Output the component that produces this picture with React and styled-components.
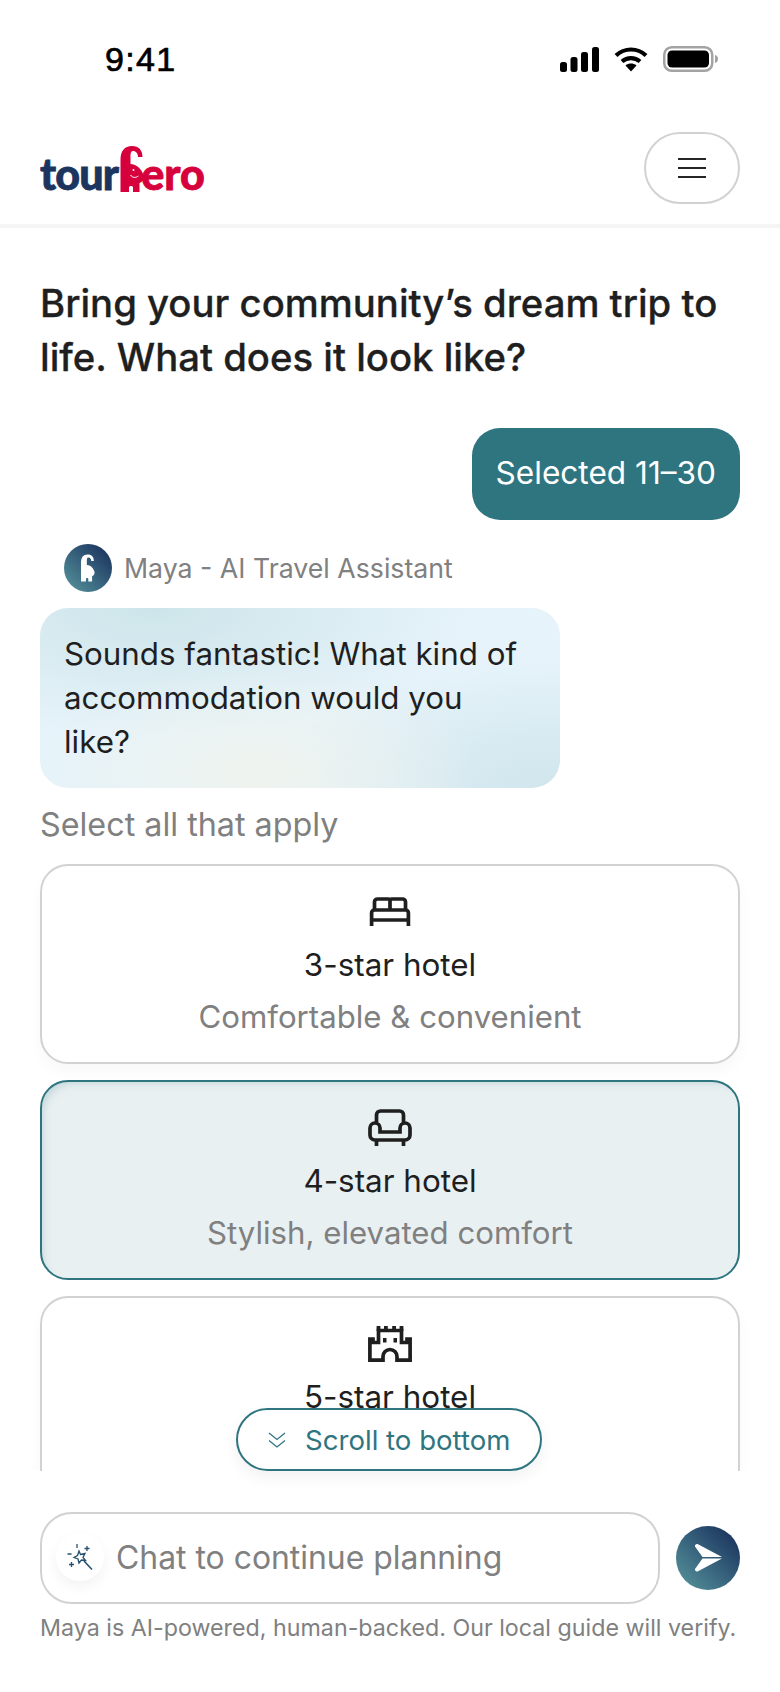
import React from 'react'
import styled, { createGlobalStyle } from 'styled-components'

const GlobalStyle = createGlobalStyle`
  html, body {
    margin: 0;
    padding: 0;
    background: #fff;
  }
  body {
    font-family: "Inter", "Noto Sans", sans-serif;
    color: #1f1f1f;
  }
`

const Page = styled.div`
  width: 780px;
  height: 1692px;
  display: flex;
  flex-direction: column;
  overflow: hidden;
  background: #fff;
`

const StatusBar = styled.div`
  height: 100px;
  box-sizing: border-box;
  padding: 41px 62px 0 105px;
  display: flex;
  justify-content: space-between;
  align-items: flex-start;
`

const Clock = styled.span`
  font-family: "Liberation Sans", sans-serif;
  font-size: 34px;
  line-height: 36px;
  font-weight: 400;
  -webkit-text-stroke: 0.7px #000;
  color: #000;
  letter-spacing: 1.3px;
`

const StatusIcons = styled.div`
  display: flex;
  align-items: center;
  gap: 15px;
  padding-top: 5px;
`

const Header = styled.header`
  height: 128px;
  box-sizing: border-box;
  padding: 32px 40px 0;
  display: flex;
  justify-content: space-between;
  align-items: flex-start;
  border-bottom: 4px solid #f5f5f5;
`

const Logo = styled.div`
  display: flex;
  align-items: flex-end;
  gap: 2px;
  height: 47px;
  margin-top: 13px;
  font-family: "Lato", sans-serif;
  font-weight: 900;
  font-size: 43px;
  line-height: 47px;
`

const LogoWord = styled.span`
  color: ${p => p.$color};
  -webkit-text-stroke: 0.8px ${p => p.$color};
  margin-left: ${p => p.$offset || 0}px;
  letter-spacing: ${p => p.$tight || 0}px;
  position: relative;
  top: 5px;
`

const MenuButton = styled.button`
  width: 96px;
  height: 72px;
  box-sizing: border-box;
  padding: 0;
  background: #fff;
  border: 2px solid #d2d2d2;
  border-radius: 36px;
  display: flex;
  flex-direction: column;
  align-items: center;
  justify-content: center;
  gap: 7px;
`

const MenuLine = styled.span`
  width: 28px;
  height: 2px;
  background: #262626;
`

const Main = styled.main`
  position: relative;
  height: 1243px;
  flex: none;
`

const ScrollArea = styled.div`
  height: 100%;
  overflow: hidden;
  box-sizing: border-box;
  padding: 48px 40px 0;
  display: flex;
  flex-direction: column;

  & > * {
    flex: none;
  }
`

const Heading = styled.h1`
  margin: 0;
  font-size: 38.300px;
  line-height: 54px;
  font-weight: 500;
  color: #1f1f1f;
  -webkit-text-stroke: 0.3px #1f1f1f;
`

const UserBubble = styled.div`
  align-self: flex-end;
  margin-top: 44px;
  height: 92px;
  box-sizing: border-box;
  padding: 0 24px 3px;
  display: flex;
  align-items: center;
  background: #2f7580;
  color: #fff;
  font-size: 31.600px;
  border-radius: 28px;
`

const AssistantRow = styled.div`
  display: flex;
  align-items: center;
  gap: 12px;
  margin: 24px 0 0 24px;
  font-size: 26.700px;
  color: #808080;
`

const Avatar = styled.div`
  width: 48px;
  height: 48px;
  border-radius: 50%;
  background: linear-gradient(225deg, #1b355f 10%, #55929b 95%);
  display: flex;
  align-items: center;
  justify-content: center;
`

const AssistantBubble = styled.div`
  margin-top: 16px;
  width: 520px;
  height: 180px;
  box-sizing: border-box;
  padding: 24px 34px 24px 24px;
  border-radius: 28px;
  font-size: 31.300px;
  line-height: 44px;
  color: #1f1f1f;
  background:
    radial-gradient(ellipse 220px 110px at 42% 92%, #eff3ee 0%, rgba(239, 243, 238, 0) 100%),
    radial-gradient(ellipse 300px 130px at 100% 100%, #cfe5ec 0%, rgba(207, 229, 236, 0) 100%),
    radial-gradient(ellipse 320px 130px at 22% 0%, #cde5ea 0%, rgba(205, 229, 234, 0) 100%),
    #e6f3fa;
`

const Hint = styled.div`
  margin-top: 17px;
  font-size: 32.300px;
  line-height: 40px;
  color: #808080;
`

const Cards = styled.div`
  margin-top: 19px;
  display: flex;
  flex-direction: column;
  gap: 16px;
`

const Card = styled.div`
  flex: none;
  height: 200px;
  box-sizing: border-box;
  padding-top: 22px;
  border-radius: 28px;
  border: 2px solid ${p => (p.$selected ? '#2f7580' : '#d2d2d2')};
  background: ${p => (p.$selected ? '#e9f0f2' : '#fff')};
  box-shadow: ${p => (p.$selected ? 'inset 6px 6px 10px -6px rgba(47, 117, 128, 0.25)' : '0 8px 16px rgba(0, 0, 0, 0.03)')};
  display: flex;
  flex-direction: column;
  align-items: center;
`

const CardIcon = styled.svg`
  width: 48px;
  height: 48px;
  fill: none;
  stroke: #1f1f1f;
  stroke-width: 3.700;
`

const CardTitle = styled.div`
  margin-top: 9px;
  font-size: 31.400px;
  line-height: 40px;
  color: #1f1f1f;
`

const CardText = styled.div`
  margin-top: 12px;
  font-size: 31.200px;
  line-height: 40px;
  color: #808080;
`

const ScrollButton = styled.button`
  position: absolute;
  left: 236px;
  bottom: 0;
  width: 306px;
  height: 63px;
  box-sizing: border-box;
  padding: 0 0 0 30px;
  border: 2px solid #2f7580;
  border-radius: 32px;
  background: #fff;
  box-shadow: 0 6px 16px rgba(0, 0, 0, 0.06);
  display: flex;
  align-items: center;
  gap: 19px;
  font-family: inherit;
  font-size: 27.600px;
  color: #2f7580;
`

const Composer = styled.div`
  margin-top: 41px;
  padding: 0 40px;
  display: flex;
  align-items: center;
  gap: 16px;
`

const InputBox = styled.div`
  flex: 1;
  height: 92px;
  box-sizing: border-box;
  padding: 0 0 2px 14px;
  border: 2px solid #d2d2d2;
  border-radius: 32px;
  display: flex;
  align-items: center;
  gap: 12px;
  font-size: 31.900px;
  color: #808080;
`

const WandCircle = styled.div`
  width: 48px;
  height: 48px;
  border-radius: 50%;
  background: #fff;
  box-shadow: 0 6px 14px rgba(0, 0, 0, 0.05);
  display: flex;
  align-items: center;
  justify-content: center;
`

const SendButton = styled.button`
  width: 64px;
  height: 64px;
  padding: 0;
  border: 0;
  border-radius: 50%;
  background: linear-gradient(225deg, #1b355f 10%, #55929b 95%);
  display: flex;
  align-items: center;
  justify-content: center;
`

const Disclaimer = styled.div`
  margin-top: 8px;
  padding: 0 40px;
  font-size: 23.250px;
  line-height: 32px;
  color: #808080;
  white-space: nowrap;
`

const Elephant = ({ width, height, color, face }) => (
  <svg width={width} height={height} viewBox="0 0 24 46">
    <path
      fill={color}
      d="M0 46V14C0 5 4 0 11.500 0c7 0 10.500 4.500 10.500 11h-4.500c0-3.500-2-6-5-6C10 5 10 8 10 12v6c6 0 11 5 13 11 1 4-1 7-4 8v9h-6.500v-4.500c0-2-4-2-4 0V46z"
    />
    {face && <circle cx="13" cy="24" r="1" fill="#fff" />}
    {face && <path d="M10 29c2 3 5 3 8 1" fill="none" stroke="#fff" strokeWidth="1" />}
  </svg>
)

const SignalIcon = () => (
  <svg width="39" height="25" viewBox="0 0 39 25" fill="#000">
    <rect x="0" y="15" width="7" height="10" rx="2.500" />
    <rect x="10.500" y="10" width="7" height="15" rx="2.500" />
    <rect x="21" y="5" width="7" height="20" rx="2.500" />
    <rect x="32" y="0" width="7" height="25" rx="2.500" />
  </svg>
)

const WifiIcon = () => (
  <svg width="34" height="25" viewBox="0 0 34 25" fill="none" stroke="#000" strokeWidth="4.200">
    <path d="M2 8.500C10.500 0.500 23.500 0.500 32 8.500" />
    <path d="M8 14.500c5.200-4.500 12.800-4.500 18 0" />
    <path fill="#000" stroke="none" d="M11.500 18.500c3.200-2.600 7.800-2.600 11 0L17 24.500z" />
  </svg>
)

const BatteryIcon = () => (
  <svg width="55" height="26" viewBox="0 0 55 26">
    <rect x="1.250" y="1.250" width="48" height="23.500" rx="7.500" fill="none" stroke="#a3a3a3" strokeWidth="2.500" />
    <rect x="4.500" y="4.500" width="41.500" height="17" rx="4.500" fill="#000" />
    <path d="M52 9c2 .5 3 2 3 4s-1 3.500-3 4z" fill="#a3a3a3" />
  </svg>
)

const BedIcon = () => (
  <CardIcon viewBox="0 0 48 48">
    <path d="M8.500 22V14a3 3 0 0 1 3-3H22a2 2 0 0 1 2 2v9M24 13a2 2 0 0 1 2-2h10.500a3 3 0 0 1 3 3v8" />
    <path d="M5.600 38V25a3 3 0 0 1 3-3h30.800a3 3 0 0 1 3 3v13M5.600 32h36.800" />
  </CardIcon>
)

const ChairIcon = () => (
  <CardIcon viewBox="0 0 48 48">
    <path d="M10.500 18v-7a4 4 0 0 1 4-4h19a4 4 0 0 1 4 4v7" />
    <path d="M4 24a5 5 0 0 1 10 0v4h20v-4a5 5 0 0 1 10 0v7a5 5 0 0 1-5 5H9a5 5 0 0 1-5-5z" />
    <path d="M10.500 36v6M37.500 36v6" />
  </CardIcon>
)

const CastleIcon = () => (
  <CardIcon viewBox="0 0 48 48">
    <path d="M17 40.200H3.900V19H7v3.500h5.500V10.500h23v12H41V19h3.100v21.200H31" />
    <path d="M17 42v-5.500a7 7 0 0 1 14 0V42" />
    <path
      fill="#1f1f1f"
      stroke="none"
      d="M10.600 6h3.800v5h-3.800zM18 6h3.800v5H18zM26.200 6H30v5h-3.800zM33.600 6h3.800v5h-3.800zM17 18h3.500v4.500H17zM27.500 18H31v4.500h-3.500z"
    />
  </CardIcon>
)

const ChevronsIcon = () => (
  <svg width="18" height="18" viewBox="0 0 18 18" fill="none" stroke="#2f7580" strokeWidth="1.300">
    <path d="M1 2l8 6.500L17 2M1 9.500L9 16l8-6.500" />
  </svg>
)

const WandIcon = () => (
  <svg width="28" height="28" viewBox="0 0 28 28" fill="none" stroke="#24506f" strokeWidth="1.300">
    <path d="M13 8l1.500 3.500 4.500-1-2 4 2.500 3-4-.5-2.500 3-1-4-4-1.500 3.500-2z" />
    <path d="M18 18l8 8.500" strokeWidth="1.600" />
    <path d="M11 1v4M1.500 11h4M21 3v5M18.500 5.500h5M3 21.500h5M5.500 19v5" />
  </svg>
)

const SendIcon = () => (
  <svg width="30" height="30" viewBox="0 0 30 30" fill="#fff">
    <path d="M2 3.500C1.500 1.500 3.500 .5 5 1.200L29 14H9.500z" />
    <path d="M29 15.500L5 28.300c-1.500.7-3.500-.3-3-2.300l7.500-10.500z" />
  </svg>
)

const options = [
  { title: '3-star hotel', text: 'Comfortable & convenient', icon: <BedIcon /> },
  { title: '4-star hotel', text: 'Stylish, elevated comfort', icon: <ChairIcon />, selected: true },
  { title: '5-star hotel', icon: <CastleIcon /> },
]

const App = () => {
  return (
    <Page>
      <GlobalStyle />
      <StatusBar>
        <Clock>9:41</Clock>
        <StatusIcons>
          <SignalIcon />
          <WifiIcon />
          <BatteryIcon />
        </StatusIcons>
      </StatusBar>
      <Header>
        <Logo>
          <LogoWord $color="#1b355f" $tight={-0.8}>tour</LogoWord>
          <Elephant width={25} height={46} color="#d6003c" face />
          <LogoWord $color="#d6003c" $offset={-6}>ero</LogoWord>
        </Logo>
        <MenuButton aria-label="Menu">
          <MenuLine />
          <MenuLine />
          <MenuLine />
        </MenuButton>
      </Header>
      <Main>
        <ScrollArea>
          <Heading>Bring your community’s dream trip to life. What does it look like?</Heading>
          <UserBubble>Selected 11–30</UserBubble>
          <AssistantRow>
            <Avatar>
              <Elephant width={14} height={28} color="#fff" />
            </Avatar>
            Maya - AI Travel Assistant
          </AssistantRow>
          <AssistantBubble>Sounds fantastic! What kind of accommodation would you like?</AssistantBubble>
          <Hint>Select all that apply</Hint>
          <Cards>
            {options.map(o => (
              <Card key={o.title} $selected={o.selected}>
                {o.icon}
                <CardTitle>{o.title}</CardTitle>
                {o.text && <CardText>{o.text}</CardText>}
              </Card>
            ))}
          </Cards>
        </ScrollArea>
        <ScrollButton>
          <ChevronsIcon />
          Scroll to bottom
        </ScrollButton>
      </Main>
      <Composer>
        <InputBox>
          <WandCircle>
            <WandIcon />
          </WandCircle>
          Chat to continue planning
        </InputBox>
        <SendButton aria-label="Send">
          <SendIcon />
        </SendButton>
      </Composer>
      <Disclaimer>Maya is AI-powered, human-backed. Our local guide will verify.</Disclaimer>
    </Page>
  )
}

export default App
